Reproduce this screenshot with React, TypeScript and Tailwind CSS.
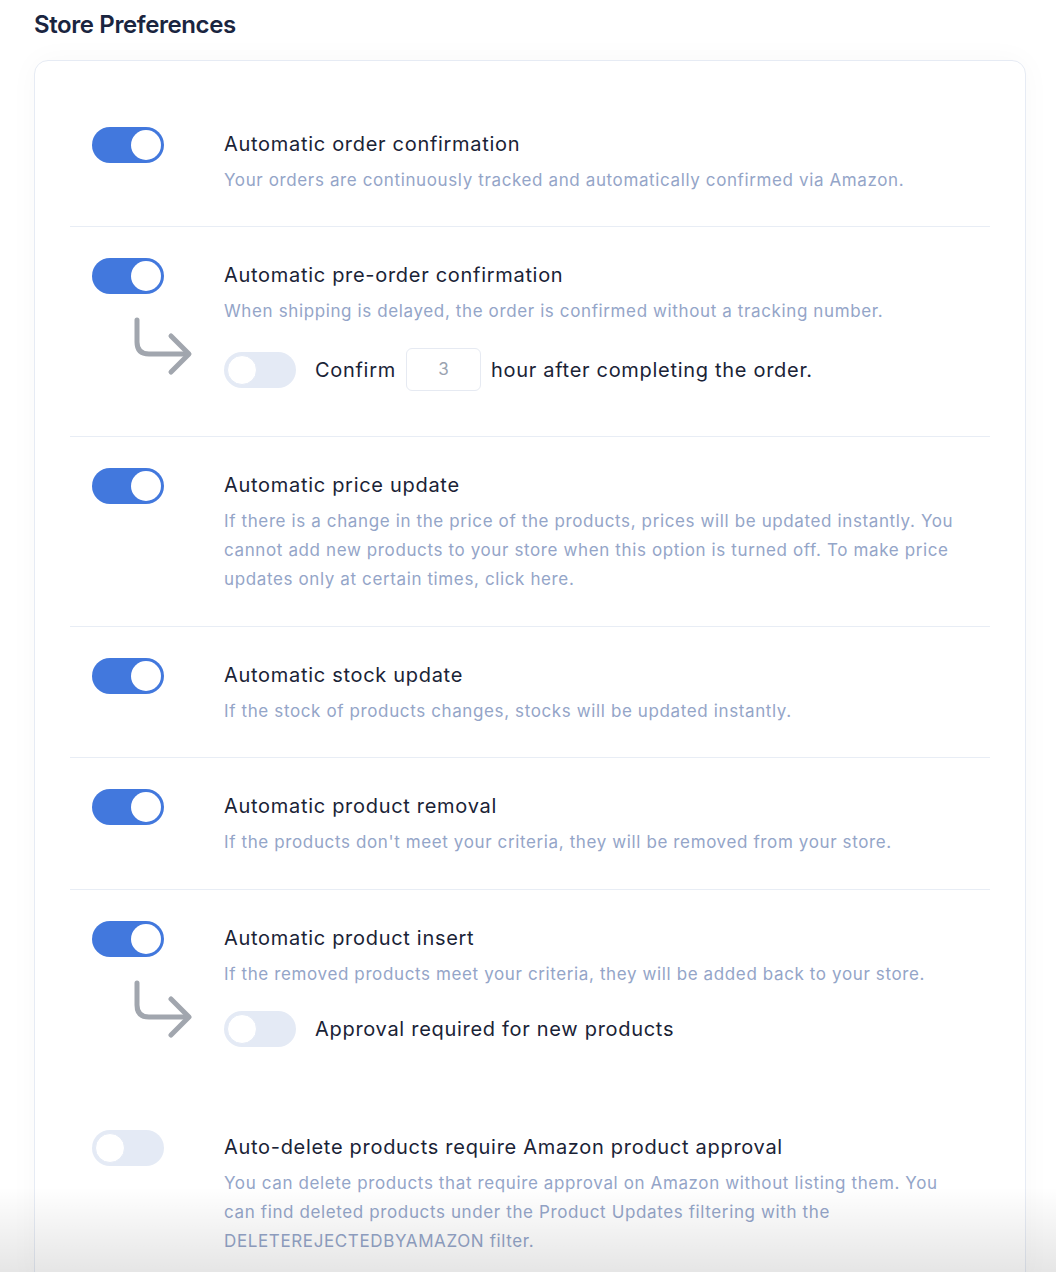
import React from "react";

const font = { fontFamily: "Inter, 'Noto Sans', sans-serif" };

function Toggle({ on }: { on: boolean }) {
  return on ? (
    <div className="flex h-[36px] w-[72px] shrink-0 items-center justify-end rounded-full bg-[#4278dd] pr-[3px]">
      <div className="h-[30px] w-[30px] rounded-full bg-white" />
    </div>
  ) : (
    <div className="flex h-[36px] w-[72px] shrink-0 items-center justify-start rounded-full bg-[#e4eaf5] pl-[3px]">
      <div className="h-[30px] w-[30px] rounded-full border border-[#e4eaf5] bg-white" />
    </div>
  );
}

function Arrow() {
  return (
    <svg width="64" height="64" viewBox="0 0 64 64" fill="none" className="ml-[38px] mt-[22px]">
      <path
        d="M7 4 V26 Q7 38 19 38 H58"
        stroke="#a1a6ae"
        strokeWidth="5"
        strokeLinecap="round"
        strokeLinejoin="round"
      />
      <path d="M41 20 L59 38 L41 56" stroke="#a1a6ae" strokeWidth="5" strokeLinecap="round" strokeLinejoin="round" />
    </svg>
  );
}

function Row({
  on,
  title,
  desc,
  sub,
  divider = true,
  pb = "pb-[31px]",
}: {
  on: boolean;
  title: string;
  desc: React.ReactNode;
  sub?: React.ReactNode;
  divider?: boolean;
  pb?: string;
}) {
  return (
    <div className={`flex pl-[22px] pt-[34px] ${pb} ${divider ? "border-b border-[#e8edf5]" : ""}`}>
      <div className="-mt-[3px] flex w-[132px] shrink-0 flex-col">
        <Toggle on={on} />
        {sub ? <Arrow /> : null}
      </div>
      <div className="flex min-w-0 flex-1 flex-col pr-[20px]">
        <div className="text-[20px] leading-[28px] tracking-[0.7px] text-[#1a2336]">{title}</div>
        <div className="mt-[8px] text-[17px] leading-[29px] tracking-[0.62px] text-[#94a5c8]">{desc}</div>
        {sub}
      </div>
    </div>
  );
}

export default function App() {
  return (
    <div style={font} className="relative h-[1272px] w-[1056px] overflow-hidden bg-white">
      <div className="pl-[34px] pr-[30px] pt-[10px]">
        <h1 className="text-[24px] font-semibold leading-[30px] tracking-[-0.4px] text-[#1a2540]">Store Preferences</h1>
        <div className="mt-[20px] rounded-[14px] border border-[#e6ebf4] bg-white px-[35px] pt-[35px] shadow-[0_0_30px_rgba(0,0,0,0.03)]">
          <Row
            on
            title="Automatic order confirmation"
            desc="Your orders are continuously tracked and automatically confirmed via Amazon."
          />
          <Row
            on
            title="Automatic pre-order confirmation"
            desc="When shipping is delayed, the order is confirmed without a tracking number."
            pb="pb-[45px]"
            sub={
              <div className="mt-[22px] flex items-center">
                <Toggle on={false} />
                <span className="ml-[19px] text-[20px] tracking-[0.7px] text-[#1a2336]">Confirm</span>
                <div className="ml-[10px] flex h-[43px] w-[75px] items-center justify-center rounded-[6px] border border-[#e6eaf2] text-[17px] text-[#9aa3b0]">
                  3
                </div>
                <span className="ml-[10px] text-[20px] tracking-[0.7px] text-[#1a2336]">hour after completing the order.</span>
              </div>
            }
          />
          <Row
            on
            title="Automatic price update"
            desc="If there is a change in the price of the products, prices will be updated instantly. You cannot add new products to your store when this option is turned off. To make price updates only at certain times, click here."
            pb="pb-[32px]"
          />
          <Row
            on
            title="Automatic stock update"
            desc="If the stock of products changes, stocks will be updated instantly."
          />
          <Row
            on
            title="Automatic product removal"
            desc="If the products don't meet your criteria, they will be removed from your store."
            pb="pb-[32px]"
          />
          <Row
            on
            title="Automatic product insert"
            desc="If the removed products meet your criteria, they will be added back to your store."
            divider={false}
            pb="pb-[52px]"
            sub={
              <div className="mt-[22px] flex items-center">
                <Toggle on={false} />
                <span className="ml-[19px] text-[20px] tracking-[0.7px] text-[#1a2336]">Approval required for new products</span>
              </div>
            }
          />
          <Row
            on={false}
            title="Auto-delete products require Amazon product approval"
            desc="You can delete products that require approval on Amazon without listing them. You can find deleted products under the Product Updates filtering with the DELETEREJECTEDBYAMAZON filter."
            divider={false}
          />
        </div>
      </div>
      <div className="pointer-events-none absolute bottom-0 left-0 right-0 h-[85px] bg-gradient-to-b from-black/0 to-black/[0.1]" />
    </div>
  );
}
